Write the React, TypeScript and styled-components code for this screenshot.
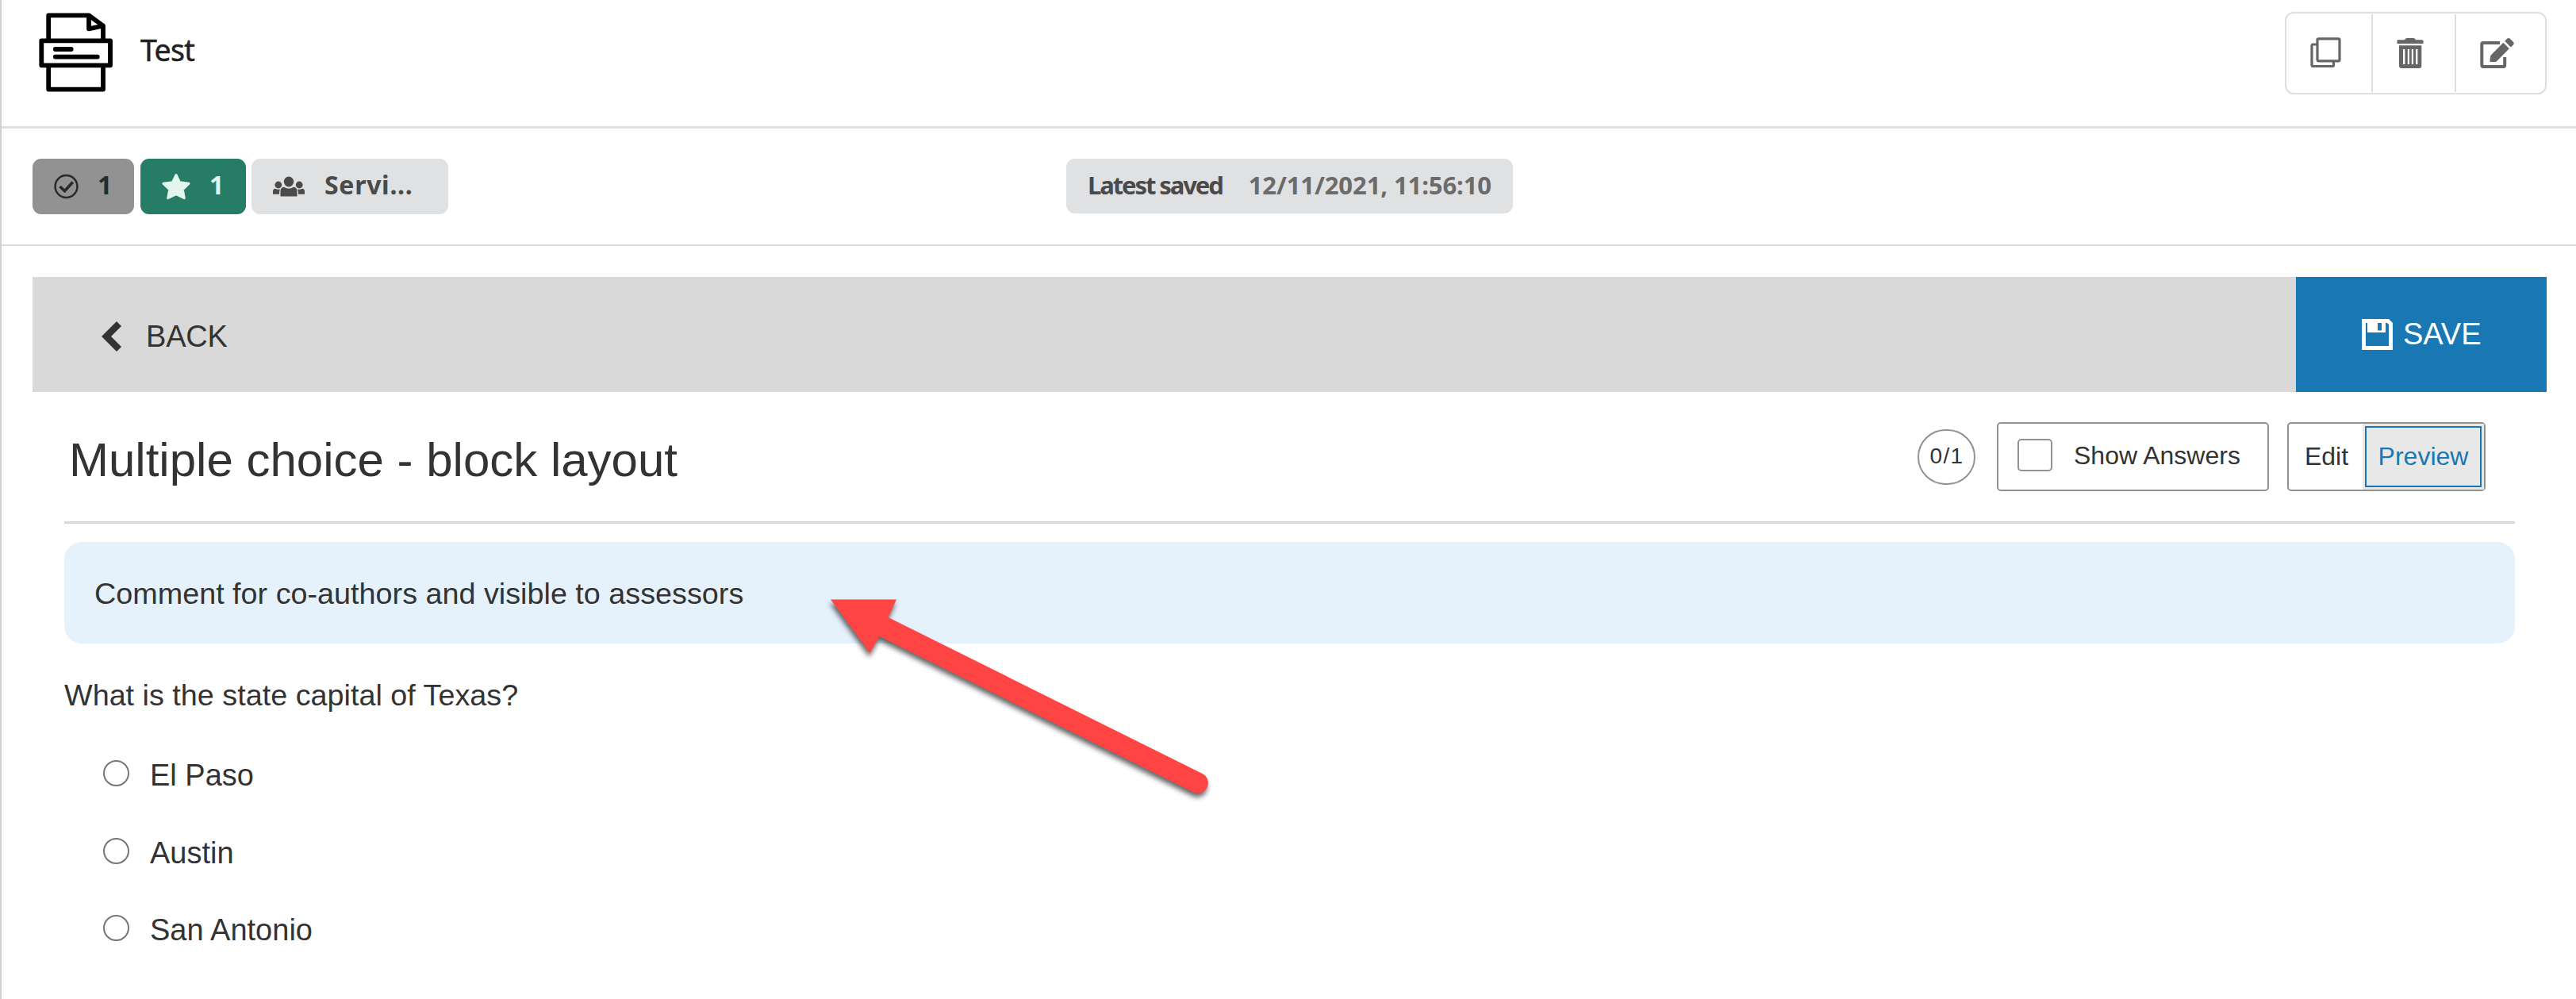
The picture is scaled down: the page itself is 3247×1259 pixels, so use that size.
import React from "react";
import styled, { createGlobalStyle } from "styled-components";

const Global = createGlobalStyle`
  * { box-sizing: border-box; }
  body {
    margin: 0;
    background: #fff;
    font-family: "Liberation Sans", Arial, sans-serif;
    color: #333;
  }
  svg { display: block; flex: none; }
`;

const humanist = `"Noto Sans", "Open Sans", sans-serif`;

const Page = styled.div`
  position: relative;
  height: 1259px;
  overflow: hidden;
  border-left: 2px solid #d0d0d0;
`;

const Header = styled.header`
  display: flex;
  align-items: flex-start;
  justify-content: space-between;
  height: 162px;
  padding: 15px 37px 0 46px;
  border-bottom: 3px solid #e0e0e0;
`;

const Brand = styled.div`
  display: flex;
  align-items: flex-start;
  gap: 35px;
`;

const ItemName = styled.h1`
  margin: 0;
  padding-top: 23px;
  font: 400 37.5px/50px ${humanist};
  letter-spacing: -0.7px;
  color: #222;
  -webkit-text-stroke: 0.5px #222;
`;

const Toolbar = styled.div`
  display: flex;
  width: 330px;
  height: 104px;
  padding: 1px 0;
  border: 2px solid #dedede;
  border-radius: 11px;
`;

const ToolButton = styled.button<{ $width: number; $inset: number }>`
  display: flex;
  align-items: flex-start;
  width: ${(p) => p.$width}px;
  padding: 29px 0 0 ${(p) => p.$inset}px;
  border: 0;
  background: none;
  color: #666;
  & + & { border-left: 2px solid #dedede; }
`;

const StatusBar = styled.section`
  display: flex;
  align-items: flex-start;
  height: 148px;
  padding: 38px 39px 0;
  border-bottom: 2px solid #dcdcdc;
`;

const Badge = styled.div<{ $bg: string; $fg: string; $width: number; $gap: number; $after: number; $inset: number }>`
  display: flex;
  align-items: center;
  gap: ${(p) => p.$gap}px;
  width: ${(p) => p.$width}px;
  height: 70px;
  margin-right: ${(p) => p.$after}px;
  padding-left: ${(p) => p.$inset}px;
  border-radius: 11px;
  background: ${(p) => p.$bg};
  color: ${(p) => p.$fg};
  font: 700 32px/66px ${humanist};
`;

const BadgeText = styled.span<{ $spacing?: number }>`
  height: 70px;
  letter-spacing: ${(p) => p.$spacing ?? 0}px;
  white-space: nowrap;
`;

const Saved = styled.div`
  display: flex;
  align-items: flex-start;
  gap: 33px;
  width: 563px;
  height: 69px;
  padding-left: 27px;
  border-radius: 11px;
  background: #e0e1e3;
  color: #4a4a4a;
  font: 700 31px/67px ${humanist};
  white-space: nowrap;
`;

const SavedLabel = styled.span`
  letter-spacing: -2.1px;
`;

const SavedTime = styled.time`
  letter-spacing: -0.1px;
  color: #6b6b6b;
`;

const ActionBar = styled.nav`
  display: flex;
  justify-content: space-between;
  height: 145px;
  margin: 39px 37px 0 39px;
  background: #d9d9d9;
`;

const BackButton = styled.button`
  display: flex;
  align-items: center;
  gap: 31px;
  padding: 4px 0 0 87px;
  border: 0;
  background: none;
  color: #333;
  font: 400 38px/44px "Liberation Sans", Arial, sans-serif;
  letter-spacing: -0.2px;
`;

const SaveButton = styled.button`
  display: flex;
  align-items: center;
  gap: 13px;
  width: 316px;
  padding: 0 0 1px 83px;
  border: 0;
  background: #1978b3;
  color: #fff;
  font: 400 38px/44px "Liberation Sans", Arial, sans-serif;
`;

const Item = styled.main`
  margin: 0 77px 0 79px;
`;

const TitleRow = styled.div`
  display: flex;
  align-items: flex-start;
  justify-content: space-between;
  height: 166px;
  padding: 38px 37px 0 6px;
  border-bottom: 3px solid #d9d9d9;
`;

const Title = styled.h2`
  margin: 0;
  padding-top: 12px;
  font-size: 60px;
  font-weight: 400;
  line-height: 72px;
`;

const Controls = styled.div`
  display: flex;
  align-items: flex-start;
`;

const Score = styled.div`
  display: flex;
  align-items: center;
  justify-content: center;
  width: 73px;
  height: 70px;
  margin: 9px 27px 0 0;
  padding: 0 0 3px 1px;
  border: 2px solid #929292;
  border-radius: 36px;
  font-size: 28px;
  letter-spacing: 1.3px;
`;

const ShowAnswers = styled.label`
  display: flex;
  align-items: center;
  gap: 27px;
  width: 343px;
  height: 87px;
  margin-right: 23px;
  padding: 0 0 2px 24px;
  border: 2px solid #929292;
  border-radius: 5px;
  font-size: 32px;
`;

const CheckBox = styled.input`
  appearance: none;
  width: 44px;
  height: 41px;
  margin: 0 0 2px;
  border: 2px solid #929292;
  border-radius: 5px;
`;

const Modes = styled.div`
  display: flex;
  width: 250px;
  height: 87px;
  border: 2px solid #929292;
  border-radius: 5px;
`;

const ModeButton = styled.button<{ $active?: boolean }>`
  flex: ${(p) => (p.$active ? "1" : "0 0 93px")};
  padding: 0 0 2px ${(p) => (p.$active ? 0 : 2)}px;
  border: 0;
  background: ${(p) => (p.$active ? "#e8e8e8" : "transparent")};
  color: ${(p) => (p.$active ? "#1978b3" : "#333")};
  outline: ${(p) => (p.$active ? "2px solid #1978b3" : "none")};
  outline-offset: -5px;
  font: 400 32px/36px "Liberation Sans", Arial, sans-serif;
`;

const Comment = styled.aside`
  display: flex;
  align-items: center;
  height: 128px;
  margin-top: 23px;
  padding: 2px 0 0 38px;
  border-radius: 22px;
  background: #e5f2fc;
  font-size: 37.75px;
`;

const Question = styled.p`
  margin: 43px 0 0;
  font-size: 37.75px;
  line-height: 44px;
`;

const Options = styled.ul`
  margin: 28px 0 0;
  padding: 0 0 0 49px;
  list-style: none;
`;

const Option = styled.li`
  display: flex;
  align-items: flex-start;
  gap: 26px;
  height: 97.5px;
  padding-top: 32px;
  font-size: 38px;
  line-height: 38px;
`;

const Radio = styled.input`
  appearance: none;
  width: 33px;
  height: 33px;
  margin: 0;
  border: 2.5px solid #767676;
  border-radius: 50%;
`;

const Pointer = styled.svg`
  position: absolute;
  left: 1028px;
  top: 740px;
  filter: drop-shadow(-1px 5px 3px rgba(0, 0, 0, 0.6));
`;

const PrinterIcon = () => (
  <svg width="94" height="101" viewBox="0 0 94 101" fill="none" stroke="#000" strokeWidth="5.8" strokeLinejoin="round" strokeLinecap="round">
    <path d="M13.2 34V4.3H64L82 17.5V34M64 4.3V21.3L82 17.5" />
    <path d="M4.3 36.3H91V67.3H4.3zM13.2 70V97.6H82V70M21.8 47H41.7M21.8 56.6H74.8" />
  </svg>
);

const CopyIcon = () => (
  <svg width="39" height="39" viewBox="0 0 39 39" fill="none" stroke="currentColor" strokeWidth="3.2" strokeLinejoin="round">
    <rect x="9" y="1.8" width="28" height="28" rx="1.5" />
    <path d="M8 9H3.5Q2 9 2 10.5V35Q2 36.5 3.5 36.5H28Q29.5 36.5 29.5 35V30" />
  </svg>
);

const TrashIcon = () => (
  <svg width="34" height="40" viewBox="0 0 34 40" fill="currentColor">
    <path d="M1 3.3H10Q11 1 13 1H21Q23 1 24 3.3H32Q33.5 3.3 33.5 4.8V8H.5V4Q.5 3.3 1 3.3z" />
    <path fillRule="evenodd" d="M3 10.3H31.3V36Q31.3 39 28.3 39H6Q3 39 3 36zM8 15V34H10.4V15zM13.8 15V34H16V15zM18.8 15V34H21V15zM24 15V34H26.4V15z" />
  </svg>
);

const EditIcon = () => (
  <svg width="44" height="40" viewBox="0 0 44 40">
    <path d="M25 7H4Q2.3 7 2.3 8.7V35.3Q2.3 37 4 37H29.5Q31.2 37 31.2 35.3V25" fill="none" stroke="currentColor" strokeWidth="4" />
    <path d="M29.3 6.8L36.8 14.2L21 30.3Q20.3 31 19 31H13.5Q12.3 31 12.4 29.8L13 24.5Q13 23.3 14 22.3zM31.2 4.8L34.4 1.6Q36 .2 37.6 1.6L42 6Q43.6 7.6 42.2 9.2L38.8 12.4z" fill="currentColor" />
  </svg>
);

const CheckIcon = () => (
  <svg width="31" height="32" viewBox="0 0 32 32" fill="none" stroke="#2a2a2a">
    <circle cx="16" cy="16" r="14.4" strokeWidth="2.6" />
    <path d="M7.8 16L14 21.9L24.5 10.4" strokeWidth="3.8" />
  </svg>
);

const StarIcon = () => (
  <svg width="36" height="34" viewBox="0 0 36 34" fill="#e2f6ed" stroke="#e2f6ed" strokeWidth="3" strokeLinejoin="round">
    <path d="M18 2.5L22.4 11.7L34 13.3L26.2 20.8L28.3 31.7L18 26.6L7.7 31.7L9.8 20.8L2 13.3L13.6 11.7z" />
  </svg>
);

const GroupIcon = () => (
  <svg width="42" height="26" viewBox="0 0 42 26" fill="#4a4a4a">
    <ellipse cx="21" cy="7" rx="6.2" ry="6.5" />
    <circle cx="7.8" cy="11" r="4.4" />
    <circle cx="34.2" cy="11" r="4.4" />
    <path d="M10.5 25V19.5Q10.5 14 15 13.8Q21 17.5 27 13.8Q31.5 14 31.5 19.5V25Q31.5 25.5 30.5 25.5H11.5Q10.5 25.5 10.5 25zM1 22.5V19.5Q1 16 4 15.8Q7 17.5 10 16.4Q9 18 9 22.8H2Q1 22.8 1 22.5zM41 22.5V19.5Q41 16 38 15.8Q35 17.5 32 16.4Q33 18 33 22.8H40Q41 22.8 41 22.5z" />
  </svg>
);

const ChevronIcon = () => (
  <svg width="25" height="38" viewBox="0 0 25 38" fill="#333">
    <path d="M19 0L25 6L12 19L25 32L19 38L0 19z" />
  </svg>
);

const DiskIcon = () => (
  <svg width="39" height="39" viewBox="0 0 39 39">
    <path fill="#fff" fillRule="evenodd" d="M0 0H34L39 5V39H0zM5 5V34H34V7L32 5H30V17H7V5zM20 5V14.5H25V5z" />
  </svg>
);

const answers = ["El Paso", "Austin", "San Antonio"];

export default function App() {
  return (
    <Page>
      <Global />
      <Header>
        <Brand>
          <PrinterIcon />
          <ItemName>Test</ItemName>
        </Brand>
        <Toolbar>
          <ToolButton $width={107} $inset={30} aria-label="Duplicate"><CopyIcon /></ToolButton>
          <ToolButton $width={105} $inset={30} aria-label="Delete"><TrashIcon /></ToolButton>
          <ToolButton $width={114} $inset={30} aria-label="Edit"><EditIcon /></ToolButton>
        </Toolbar>
      </Header>
      <StatusBar>
        <Badge $bg="#929292" $fg="#2a2a2a" $width={128} $gap={24} $after={8} $inset={27}>
          <CheckIcon /><BadgeText>1</BadgeText>
        </Badge>
        <Badge $bg="#277c66" $fg="#e2f6ed" $width={133} $gap={24} $after={7} $inset={27}>
          <StarIcon /><BadgeText>1</BadgeText>
        </Badge>
        <Badge $bg="#e0e1e3" $fg="#4a4a4a" $width={248} $gap={24} $after={779} $inset={26}>
          <GroupIcon /><BadgeText $spacing={0.7}>Servi...</BadgeText>
        </Badge>
        <Saved>
          <SavedLabel>Latest saved</SavedLabel>
          <SavedTime>12/11/2021, 11:56:10</SavedTime>
        </Saved>
      </StatusBar>
      <ActionBar>
        <BackButton><ChevronIcon />BACK</BackButton>
        <SaveButton><DiskIcon />SAVE</SaveButton>
      </ActionBar>
      <Item>
        <TitleRow>
          <Title>Multiple choice - block layout</Title>
          <Controls>
            <Score>0/1</Score>
            <ShowAnswers><CheckBox type="checkbox" />Show Answers</ShowAnswers>
            <Modes>
              <ModeButton>Edit</ModeButton>
              <ModeButton $active>Preview</ModeButton>
            </Modes>
          </Controls>
        </TitleRow>
        <Comment>Comment for co-authors and visible to assessors</Comment>
        <Question>What is the state capital of Texas?</Question>
        <Options>
          {answers.map((answer) => (
            <Option key={answer}>
              <Radio type="radio" name="capital" />
              {answer}
            </Option>
          ))}
        </Options>
      </Item>
      <Pointer width="510" height="280" viewBox="1030 740 510 280">
        <path d="M1047 755.5H1130L1119.5 778L1515.5 975A12.9 12.9 0 0 1 1504 998.3L1108.5 802L1096.5 823z" fill="#ff4444" />
      </Pointer>
    </Page>
  );
}
